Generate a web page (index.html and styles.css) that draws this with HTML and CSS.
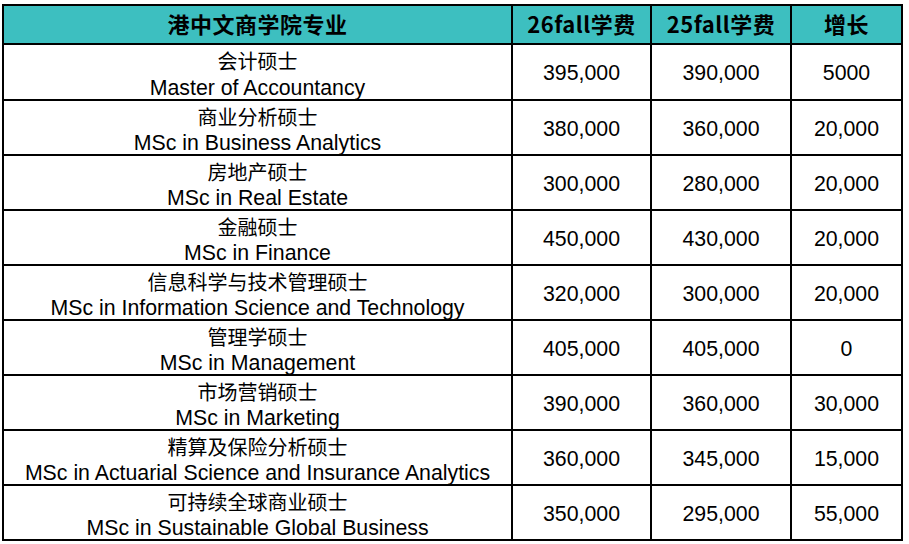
FILE: index.html
```html
<!DOCTYPE html>
<html lang="zh-CN">
<head>
<meta charset="utf-8">
<title>港中文商学院专业学费</title>
<link rel="stylesheet" href="styles.css">
</head>
<body>
<table class="fees">
  <colgroup>
    <col class="c-name">
    <col class="c-num">
    <col class="c-num2">
    <col class="c-inc">
  </colgroup>
  <thead>
    <tr class="head">
      <th>港中文商学院专业</th>
      <th>26fall学费</th>
      <th>25fall学费</th>
      <th>增长</th>
    </tr>
  </thead>
  <tbody>
    <tr class="first">
      <td class="name"><span class="zh">会计硕士</span><span class="en">Master of Accountancy</span></td>
      <td>395,000</td><td>390,000</td><td>5000</td>
    </tr>
    <tr>
      <td class="name"><span class="zh">商业分析硕士</span><span class="en">MSc in Business Analytics</span></td>
      <td>380,000</td><td>360,000</td><td>20,000</td>
    </tr>
    <tr>
      <td class="name"><span class="zh">房地产硕士</span><span class="en">MSc in Real Estate</span></td>
      <td>300,000</td><td>280,000</td><td>20,000</td>
    </tr>
    <tr>
      <td class="name"><span class="zh">金融硕士</span><span class="en">MSc in Finance</span></td>
      <td>450,000</td><td>430,000</td><td>20,000</td>
    </tr>
    <tr>
      <td class="name"><span class="zh">信息科学与技术管理硕士</span><span class="en">MSc in Information Science and Technology</span></td>
      <td>320,000</td><td>300,000</td><td>20,000</td>
    </tr>
    <tr>
      <td class="name"><span class="zh">管理学硕士</span><span class="en">MSc in Management</span></td>
      <td>405,000</td><td>405,000</td><td>0</td>
    </tr>
    <tr>
      <td class="name"><span class="zh">市场营销硕士</span><span class="en">MSc in Marketing</span></td>
      <td>390,000</td><td>360,000</td><td>30,000</td>
    </tr>
    <tr>
      <td class="name"><span class="zh">精算及保险分析硕士</span><span class="en">MSc in Actuarial Science and Insurance Analytics</span></td>
      <td>360,000</td><td>345,000</td><td>15,000</td>
    </tr>
    <tr>
      <td class="name"><span class="zh">可持续全球商业硕士</span><span class="en">MSc in Sustainable Global Business</span></td>
      <td>350,000</td><td>295,000</td><td>55,000</td>
    </tr>
  </tbody>
</table>
</body>
</html>
```

FILE: styles.css
```css
html, body {
  margin: 0;
  padding: 0;
  background: #ffffff;
}

body {
  padding: 4px 0 0 2px;
  font-family: "Liberation Sans", Arial, "Noto Sans CJK SC", sans-serif;
  color: #000000;
}

.fees {
  border-collapse: separate;
  border-spacing: 0;
  border-top: 2px solid #000;
  border-left: 2px solid #000;
  table-layout: fixed;
  width: 901px;
}

.c-name { width: 509px; }
.c-num { width: 139px; }
.c-num2 { width: 140px; }
.c-inc { width: 111px; }

.fees th,
.fees td {
  border-right: 2px solid #000;
  border-bottom: 2px solid #000;
  padding: 3px 0 0 0;
  text-align: center;
  vertical-align: middle;
  box-sizing: border-box;
}

.head th {
  background: #3dbfc0;
  height: 39px;
  font-family: "Noto Sans CJK SC", "Microsoft YaHei", sans-serif;
  font-weight: 700;
  font-size: 22px;
  line-height: 30px;
  letter-spacing: 0.5px;
  padding: 0 0 3px 0;
}

.fees td {
  height: 55px;
  font-size: 21.3px;
  line-height: 25px;
}

.fees tr.first td {
  height: 56px;
}

.fees td.name {
  padding: 0;
}

.name .zh,
.name .en {
  display: block;
  line-height: 20px;
}

.name .zh {
  font-family: "Noto Sans CJK SC", sans-serif;
  font-size: 20px;
  margin-top: 5px;
}

.name .en {
  font-family: "Liberation Sans", Arial, sans-serif;
  font-size: 21.3px;
  margin-top: 6.5px;
}
```
